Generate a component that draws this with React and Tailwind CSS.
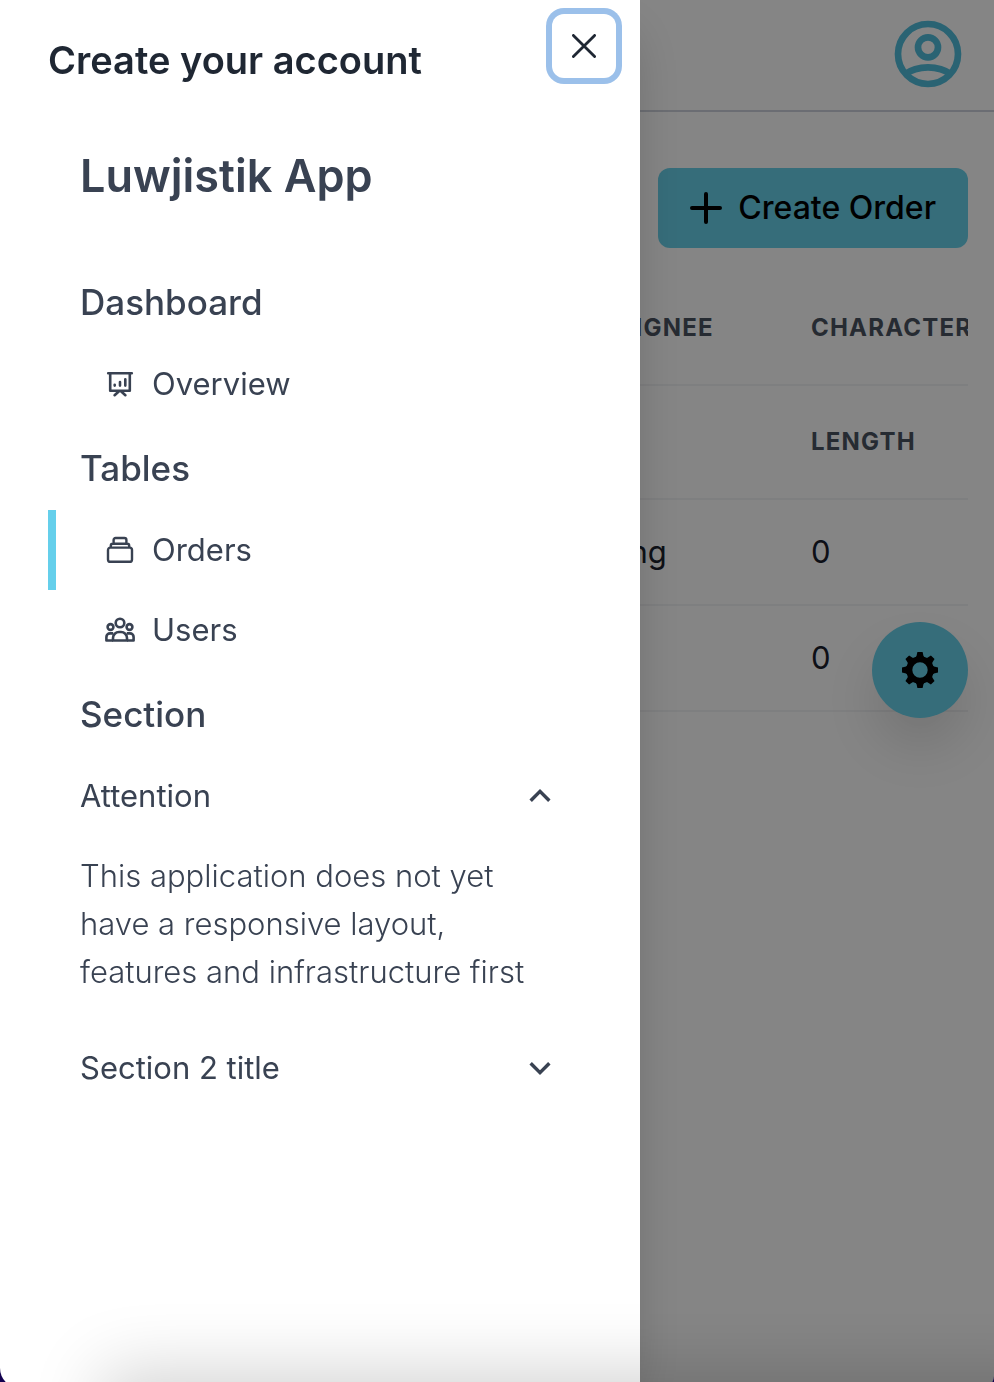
import { useState } from "react";

function OverviewIcon() {
  return (
    <svg viewBox="0 0 32 32" className="size-8 shrink-0" fill="none" stroke="currentColor" strokeWidth="2.6" strokeLinecap="round" strokeLinejoin="round" aria-hidden="true">
      <path d="M4.2 5.2h23.6M6.200 5.200v17.600h19.600V5.200M15 23.200l-4.400 4M17 23.200l4.400 4" />
      <path d="M10.700 16.800v.8M16 14v3.600M21.300 11.200v6.400" />
    </svg>
  );
}

function OrdersIcon() {
  return (
    <svg viewBox="0 0 32 32" className="size-8 shrink-0" fill="none" stroke="currentColor" strokeWidth="2.400" strokeLinejoin="round" aria-hidden="true">
      <rect x="4" y="13.600" width="24" height="14.200" rx="2.400" />
      <path d="M6.800 13.600v-1.800a2 2 0 0 1 2-2h14.400a2 2 0 0 1 2 2v1.800M9.600 9.600V6a2 2 0 0 1 2-2h8.800a2 2 0 0 1 2 2v3.600" />
    </svg>
  );
}

function UsersIcon() {
  return (
    <svg viewBox="0 0 32 32" className="size-8 shrink-0" fill="none" stroke="currentColor" strokeWidth="2.600" strokeLinejoin="round" aria-hidden="true">
      <circle cx="16" cy="9" r="4.300" />
      <circle cx="6.500" cy="13" r="2.900" />
      <circle cx="25.500" cy="13" r="2.900" />
      <path d="M9 26.500v-2.500a6 6 0 0 1 6-6h2a6 6 0 0 1 6 6v2.500z" />
      <path d="M9 26.500H2.400V23a3.600 3.600 0 0 1 3.600-3.600h3.200M23 26.500h6.600V23a3.600 3.600 0 0 0-3.600-3.600h-3.200" />
    </svg>
  );
}

function AccountIcon() {
  return (
    <svg viewBox="0 0 24 24" className="size-20" fill="none" stroke="currentColor" strokeWidth="2" aria-hidden="true">
      <circle cx="12" cy="12" r="9" />
      <circle cx="12" cy="10" r="3" />
      <path d="M4.800 18.200C6.800 16.800 9.300 16 12 16s5.200.8 7.200 2.200" />
    </svg>
  );
}

const TEETH = [0, 45, 90, 135, 180, 225, 270, 315];

function GearIcon() {
  return (
    <svg viewBox="-18 -18 36 36" className="size-9" fill="currentColor" aria-hidden="true">
      <circle r="10.700" fill="none" stroke="currentColor" strokeWidth="6" />
      {TEETH.map((angle) => (
        <path key={angle} d="M-2.600-18h5.200l.9 4 2 2.400h-11l2-2.400z" transform={`rotate(${angle})`} />
      ))}
    </svg>
  );
}

function Chevron({ open }) {
  return (
    <svg viewBox="0 0 24 24" className="size-8" fill="none" stroke="currentColor" strokeWidth="2.600" aria-hidden="true">
      <path d={open ? "M5 15.500l7-7 7 7" : "M5 8.500l7 7 7-7"} />
    </svg>
  );
}

function NavHeading({ children }) {
  return <h3 className="px-8 pt-5 pb-[18px] text-[35px] leading-[48px] font-medium">{children}</h3>;
}

function NavLink({ icon, active, children }) {
  return (
    <a
      href="#"
      aria-current={active ? "page" : undefined}
      className={`flex h-20 items-center gap-4 border-l-8 pl-12 text-[31px] ${active ? "border-[#65cfeb]" : "border-transparent"}`}
    >
      {icon}
      {children}
    </a>
  );
}

function Section({ title, defaultOpen = false, children }) {
  const [open, setOpen] = useState(defaultOpen);
  return (
    <div className="pr-9 pl-8">
      <button
        type="button"
        aria-expanded={open}
        onClick={() => setOpen(!open)}
        className="flex h-20 w-full items-center justify-between text-left text-[31px]"
      >
        {title}
        <Chevron open={open} />
      </button>
      {open && <p className="pt-4 pb-8 text-[31px] leading-[48px] font-light">{children}</p>}
    </div>
  );
}

function Drawer({ onClose }) {
  return (
    <aside
      role="dialog"
      aria-label="Create your account"
      className="fixed inset-y-0 left-0 w-[640px] max-w-full overflow-y-auto bg-white text-[#394252] shadow-2xl"
    >
      <header className="flex h-[120px] items-start justify-between pr-6 pl-12">
        <h2 className="self-center text-[38px] leading-[56px] font-semibold text-[#1f2733]">Create your account</h2>
        <button
          type="button"
          aria-label="Close"
          onClick={onClose}
          className="mt-[14px] grid size-16 place-items-center rounded-xl text-[#1f2733] ring-6 ring-[#9bc0ea] outline-none"
        >
          <svg viewBox="0 0 24 24" className="size-6" fill="none" stroke="currentColor" strokeWidth="2.800" strokeLinecap="round" aria-hidden="true">
            <path d="M1.400 1.400l21.200 21.200M22.600 1.400L1.400 22.600" />
          </svg>
        </button>
      </header>
      <nav className="px-12">
        <h1 className="px-8 pt-6 pb-[50px] text-[45px] leading-[64px] font-semibold">Luwjistik App</h1>
        <NavHeading>Dashboard</NavHeading>
        <NavLink icon={<OverviewIcon />}>Overview</NavLink>
        <NavHeading>Tables</NavHeading>
        <NavLink icon={<OrdersIcon />} active>Orders</NavLink>
        <NavLink icon={<UsersIcon />}>Users</NavLink>
        <NavHeading>Section</NavHeading>
        <Section title="Attention" defaultOpen>
          This application does not yet have a responsive layout, features and infrastructure first
        </Section>
        <Section title="Section 2 title" />
      </nav>
    </aside>
  );
}

function OrdersTable() {
  const head = "h-[114px] border-b-2 border-[#f2f3f5] px-12 text-left text-2xl font-bold tracking-wider text-[#4a5361] uppercase";
  const cell = "h-[106px] border-b-2 border-[#f2f3f5] px-12 text-[31px] text-[#1a202c]";
  return (
    <div className="mt-6 overflow-hidden">
      <table className="w-[1040px] table-fixed border-separate border-spacing-0">
        <colgroup>
          <col className="w-[509px]" />
          <col className="w-[228px]" />
          <col />
        </colgroup>
        <thead>
          <tr>
            <td className={head} />
            <th className={head}>Assignee</th>
            <th className={head}>Character</th>
          </tr>
          <tr>
            <td className={head} />
            <td className={head} />
            <th className={head}>Length</th>
          </tr>
        </thead>
        <tbody>
          <tr>
            <td className={cell} />
            <td className={cell}>Wang</td>
            <td className={cell}>0</td>
          </tr>
          <tr>
            <td className={cell} />
            <td className={cell} />
            <td className={cell}>0</td>
          </tr>
        </tbody>
      </table>
    </div>
  );
}

export default function App() {
  const [open, setOpen] = useState(true);
  return (
    <div className="relative min-h-screen bg-white font-['Inter',sans-serif]">
      <header className="flex h-28 items-start justify-end border-b-2 border-[#ced2dc] pt-[14px] pr-[26px]">
        <button type="button" aria-label="Account" className="text-[#52bedc]">
          <AccountIcon />
        </button>
      </header>
      <main className="px-[26px] pt-14">
        <div className="flex justify-end">
          <button type="button" className="flex h-20 items-center gap-4 rounded-xl bg-[#68d1ea] px-8 text-[32px] font-medium text-black">
            <svg viewBox="0 0 32 32" className="size-8" fill="none" stroke="currentColor" strokeWidth="4" strokeLinecap="round" aria-hidden="true">
              <path d="M16 2v28M2 16h28" />
            </svg>
            Create Order
          </button>
        </div>
        <OrdersTable />
      </main>
      <button
        type="button"
        aria-label="Settings"
        className="absolute top-[622px] right-[26px] grid size-24 place-items-center rounded-full bg-[#68d1ea] text-black shadow-[0_30px_50px_rgba(0,0,0,0.12)]"
      >
        <GearIcon />
      </button>
      {open && (
        <>
          <div className="fixed inset-0 bg-black/48" onClick={() => setOpen(false)} />
          <Drawer onClose={() => setOpen(false)} />
        </>
      )}
      <div className="pointer-events-none fixed inset-0 overflow-hidden">
        <div className="absolute right-[-60px] -bottom-20 left-28 h-20 shadow-[0_0_70px_10px_rgba(0,0,0,0.18)]" />
        <div className="absolute inset-x-0 bottom-[-6px] h-6 rounded-br-[12px] rounded-bl-[20px] shadow-[0_0_0_20px_#12004f] [clip-path:inset(0_0_0_0)]" />
      </div>
    </div>
  );
}
